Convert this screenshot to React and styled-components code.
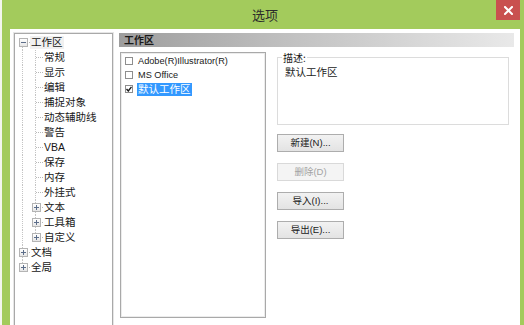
import styled, { createGlobalStyle } from "styled-components";

const GlobalStyle = createGlobalStyle`
  html, body {
    margin: 0;
    padding: 0;
    background: #ffffff;
  }
  body {
    font-family: "Liberation Sans", "Noto Sans CJK SC", sans-serif;
    overflow: hidden;
  }
`;

const TREE = [
  {
    label: "工作区",
    open: true,
    selected: true,
    children: [
      { label: "常规" },
      { label: "显示" },
      { label: "编辑" },
      { label: "捕捉对象" },
      { label: "动态辅助线" },
      { label: "警告" },
      { label: "VBA" },
      { label: "保存" },
      { label: "内存" },
      { label: "外挂式" },
      { label: "文本", children: [] },
      { label: "工具箱", children: [] },
      { label: "自定义", children: [] },
    ],
  },
  { label: "文档", children: [] },
  { label: "全局", children: [] },
];

function flatten(nodes, guides = [], rows = []) {
  nodes.forEach((node, i) => {
    const first = i === 0 && guides.length === 0;
    const last = i === nodes.length - 1;
    rows.push({
      label: node.label,
      guides,
      first,
      last,
      selected: node.selected,
      expander: node.children ? (node.open ? "minus" : "plus") : null,
    });
    if (node.open && node.children) {
      flatten(node.children, [...guides, !last], rows);
    }
  });
  return rows;
}

const LISTITEMS = [
  { label: "Adobe(R)Illustrator(R)", checked: false },
  { label: "MS Office", checked: false },
  { label: "默认工作区", checked: true, active: true, cjk: true },
];

const BUTTONS = [
  { label: "新建(N)..." },
  { label: "删除(D)", disabled: true },
  { label: "导入(I)..." },
  { label: "导出(E)..." },
];

export default function App() {
  const rows = flatten(TREE);

  return (
    <>
      <GlobalStyle />
      <Screen>
        <Window>
          <TitleBar>
            <span />
            <Title>选项</Title>
            <CloseButton aria-label="关闭">
              <svg width="9" height="9" viewBox="0 0 9 9">
                <path
                  d="M1 1 L8 8 M8 1 L1 8"
                  stroke="#ffffff"
                  strokeWidth="2"
                  strokeLinecap="square"
                />
              </svg>
            </CloseButton>
          </TitleBar>

          <Client>
            <TreePanel>
              {rows.map((row) => (
                <TreeRow key={row.label}>
                  {row.guides.map((on, i) => (
                    <Cell key={i} $up={on} $down={on} />
                  ))}
                  <Cell $up={!row.first} $down={!row.last} $branch>
                    {row.expander && (
                      <Expander $open={row.expander === "minus"} />
                    )}
                  </Cell>
                  <TreeLabel $selected={row.selected}>{row.label}</TreeLabel>
                </TreeRow>
              ))}
            </TreePanel>

            <Pane>
              <PaneHeader>工作区</PaneHeader>
              <PaneBody>
                <ListBox>
                  {LISTITEMS.map((item) => (
                    <ListRow key={item.label}>
                      <CheckBox>
                        {item.checked && (
                          <svg width="6" height="6" viewBox="0 0 6 6">
                            <path
                              d="M0.5 3 L2.3 5 L5.5 0.8"
                              fill="none"
                              stroke="#1a1a1a"
                              strokeWidth="1.4"
                            />
                          </svg>
                        )}
                      </CheckBox>
                      <ListText $active={item.active} $cjk={item.cjk}>
                        {item.label}
                      </ListText>
                    </ListRow>
                  ))}
                </ListBox>

                <SideColumn>
                  <GroupBox>
                    <Legend>描述:</Legend>
                    <GroupText>默认工作区</GroupText>
                  </GroupBox>
                  <ButtonStack>
                    {BUTTONS.map((b) => (
                      <PushButton key={b.label} disabled={b.disabled}>
                        {b.label}
                      </PushButton>
                    ))}
                  </ButtonStack>
                </SideColumn>
              </PaneBody>
            </Pane>
          </Client>
        </Window>
      </Screen>
    </>
  );
}

const Screen = styled.div`
  width: 524px;
  height: 325px;
  overflow: hidden;
  padding-left: 2px;
  box-sizing: border-box;
  background: #f3f6ee;
`;

const Window = styled.div`
  width: 522px;
  height: 345px;
  background: #a3cb5c;
  display: flex;
  flex-direction: column;
  padding: 0 4px 0 8px;
  box-sizing: border-box;
`;

const TitleBar = styled.div`
  height: 29px;
  flex: none;
  display: grid;
  grid-template-columns: 24px 1fr 24px;
  align-items: start;
`;

const Title = styled.div`
  text-align: center;
  font-family: "Noto Sans CJK SC", sans-serif;
  font-size: 13px;
  line-height: 15px;
  margin-top: 7px;
  color: #2b2b2b;
`;

const CloseButton = styled.div`
  width: 24px;
  height: 20px;
  background: #c9504f;
  display: flex;
  align-items: center;
  justify-content: center;
`;

const Client = styled.div`
  flex: 1;
  background: #ffffff;
  display: flex;
  align-items: flex-start;
  padding: 4px 6px 0 4px;
  gap: 6px;
`;

const TreePanel = styled.div`
  width: 99px;
  height: 300px;
  flex: none;
  border: 1px solid #a9a9a9;
  box-shadow: 0 0 0 1px #e6e6e6;
  padding: 0 0 0 1px;
  box-sizing: border-box;
`;

const TreeRow = styled.div`
  height: 15px;
  display: flex;
  align-items: center;
  &:first-child {
    margin-top: 1px;
  }
`;

const Cell = styled.div`
  position: relative;
  width: 13px;
  height: 15px;
  flex: none;
  display: flex;
  align-items: center;
  justify-content: center;

  &::before {
    content: "";
    position: absolute;
    left: 6px;
    top: ${(p) => (p.$up ? "0" : "7px")};
    bottom: ${(p) => (p.$down ? "0" : "8px")};
    border-left: 1px dotted #c4c4c4;
    display: ${(p) => (p.$up || p.$down ? "block" : "none")};
  }

  &::after {
    content: "";
    position: absolute;
    left: 7px;
    right: -1px;
    top: 7px;
    border-top: 1px dotted #b8b8b8;
    display: ${(p) => (p.$branch ? "block" : "none")};
  }
`;

const Expander = styled.span`
  position: relative;
  z-index: 1;
  width: 7px;
  height: 7px;
  border: 1px solid #b4b4b4;
  background: linear-gradient(#ffffff, #e6e6e6);
  margin-left: 1px;

  &::before {
    content: "";
    position: absolute;
    left: 1px;
    top: 3px;
    width: 5px;
    height: 1px;
    background: #5d6e8a;
  }

  &::after {
    content: "";
    position: absolute;
    left: 3px;
    top: 1px;
    width: 1px;
    height: 5px;
    background: #5d6e8a;
    display: ${(p) => (p.$open ? "none" : "block")};
  }
`;

const TreeLabel = styled.span`
  margin-left: 1px;
  padding: 0 1px;
  font-family: "Liberation Sans", "Noto Sans CJK SC", sans-serif;
  font-size: 10.5px;
  line-height: 13px;
  color: #161616;
  white-space: nowrap;
  background: ${(p) => (p.$selected ? "#f0f0f0" : "transparent")};
`;

const Pane = styled.div`
  flex: 1;
  display: flex;
  flex-direction: column;
  gap: 5px;
`;

const PaneHeader = styled.div`
  height: 14px;
  padding-left: 5px;
  background: linear-gradient(90deg, #9d9d9d 0%, #c2c2c2 45%, #e9e9e9 100%);
  font-family: "Noto Sans CJK SC", sans-serif;
  font-weight: 700;
  font-size: 10px;
  line-height: 14px;
  color: #1a1a1a;
`;

const PaneBody = styled.div`
  display: flex;
  align-items: flex-start;
  gap: 11px;
  padding-left: 1px;
`;

const ListBox = styled.div`
  width: 146px;
  height: 266px;
  flex: none;
  border: 1px solid #a9a9a9;
  box-shadow: inset 0 0 0 1px #ececec;
  box-sizing: border-box;
  padding: 1px 0 0 4px;
`;

const ListRow = styled.div`
  height: 14px;
  display: flex;
  align-items: center;
  gap: 4px;
`;

const CheckBox = styled.span`
  width: 8px;
  height: 8px;
  flex: none;
  border: 1px solid #8e8e8e;
  background: #ffffff;
  box-sizing: border-box;
  display: flex;
  align-items: center;
  justify-content: center;
`;

const ListText = styled.span`
  font-family: "Liberation Sans", "Noto Sans CJK SC", sans-serif;
  font-size: ${(p) => (p.$cjk ? "10.5px" : "9.2px")};
  line-height: 13px;
  padding: 0 1px;
  color: ${(p) => (p.$active ? "#ffffff" : "#1a1a1a")};
  background: ${(p) => (p.$active ? "#3399ff" : "transparent")};
  white-space: nowrap;
`;

const SideColumn = styled.div`
  width: 232px;
  display: flex;
  flex-direction: column;
  gap: 9px;
`;

const GroupBox = styled.fieldset`
  margin: 0;
  height: 73px;
  box-sizing: border-box;
  border: 1px solid #dcdcdc;
  padding: 0 7px;
  min-width: 0;
`;

const Legend = styled.legend`
  padding: 0 1px;
  margin-left: -3px;
  font-family: "Noto Sans CJK SC", sans-serif;
  font-size: 10px;
  line-height: 11px;
  color: #1a1a1a;
`;

const GroupText = styled.div`
  font-family: "Noto Sans CJK SC", sans-serif;
  font-size: 10.5px;
  line-height: 13px;
  margin-top: 2px;
  color: #222222;
`;

const ButtonStack = styled.div`
  display: flex;
  flex-direction: column;
  gap: 11px;
`;

const PushButton = styled.button`
  width: 67px;
  height: 18px;
  padding: 0;
  box-sizing: border-box;
  border: 1px solid ${(p) => (p.disabled ? "#d9d9d9" : "#adadad")};
  border-radius: 0;
  background: ${(p) =>
    p.disabled ? "#f4f4f4" : "linear-gradient(#f2f2f2, #e3e3e3)"};
  font-family: "Liberation Sans", "Noto Sans CJK SC", sans-serif;
  font-size: 9.5px;
  line-height: 16px;
  color: ${(p) => (p.disabled ? "#a3a3a3" : "#1a1a1a")};
`;
